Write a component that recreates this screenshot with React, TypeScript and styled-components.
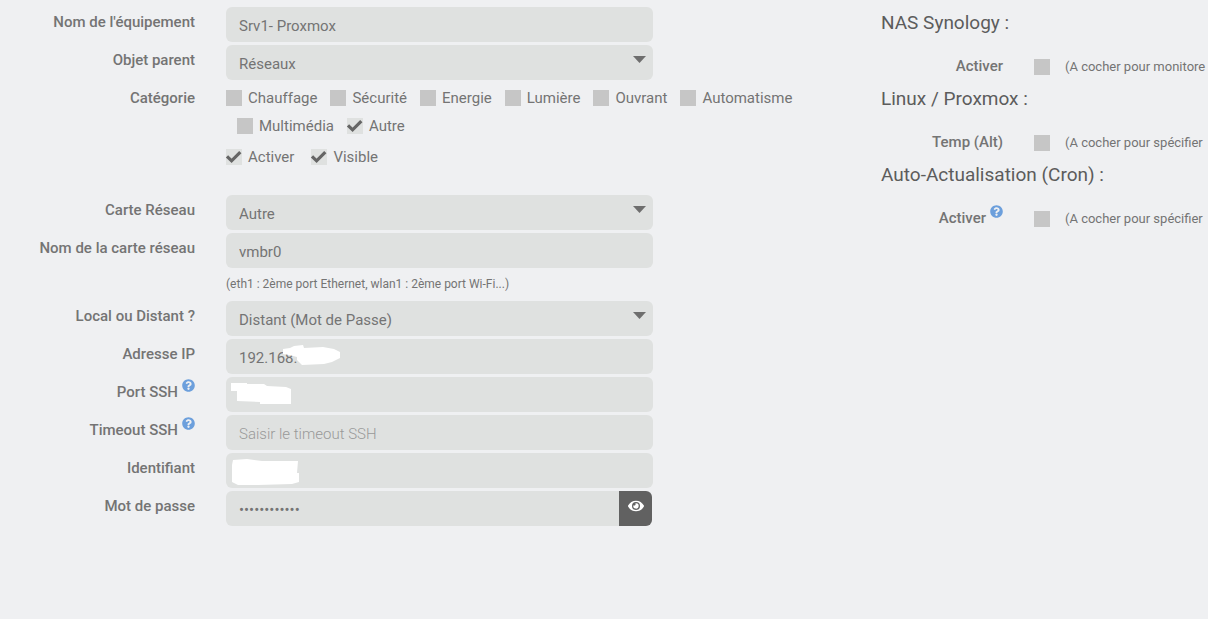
import React from "react";
import styled, { createGlobalStyle, css } from "styled-components";
import { FaEye, FaQuestionCircle } from "react-icons/fa";

const GlobalStyle = createGlobalStyle`
  * { box-sizing: border-box; }
  body {
    margin: 0;
    background: #eff0f2;
    color: #747474;
    font: 400 15px/30px Roboto, "Liberation Sans", sans-serif;
  }
`;

const Page = styled.main`
  display: grid;
  grid-template-columns: minmax(0, 881fr) minmax(0, 327fr);
  min-height: 100vh;
  padding-top: 7px;
  overflow: hidden;
`;

const Form = styled.form`
  display: flex;
  flex-direction: column;
  gap: 3px;
`;

const Row = styled.div<{ $spaced?: boolean }>`
  display: grid;
  grid-template-columns: 195px minmax(0, 427fr) minmax(0, 197fr);
  column-gap: 31px;
  align-items: start;
  margin-top: ${(p) => (p.$spaced ? "21px" : "0")};
`;

const labelText = css`
  display: flex;
  justify-content: flex-end;
  gap: 4px;
  font-weight: 500;
  white-space: nowrap;
`;

const Label = styled.label`
  ${labelText}
`;

const GroupLabel = styled.span`
  ${labelText}
`;

const Help = styled(FaQuestionCircle)`
  width: 13px;
  height: 13px;
  margin-top: 2px;
  color: #6c9fdc;
`;

const Field = styled.div`
  position: relative;
  display: flex;
  height: 35px;
`;

const control = css`
  flex: 1;
  min-width: 0;
  height: 100%;
  border: 0;
  border-radius: 6px;
  padding: 2px 13px 0;
  background: #dfe1e0;
  color: #747474;
  font: inherit;
  outline: 0;
`;

const Input = styled.input<{ $joined?: boolean }>`
  ${control}
  ${(p) => p.$joined && "border-radius: 6px 0 0 6px;"}
  &::placeholder {
    color: #999;
    font-weight: 300;
    opacity: 1;
  }
`;

const Select = styled.select`
  ${control}
  appearance: none;
`;

const Arrow = styled.svg`
  position: absolute;
  top: 11px;
  right: 7px;
  width: 13px;
  height: 7px;
  fill: #6e6e6e;
  pointer-events: none;
`;

const Scribble = styled.svg`
  position: absolute;
  top: 0;
  left: 0;
  width: 120px;
  height: 36px;
  fill: #fff;
  pointer-events: none;
`;

const RevealButton = styled.button`
  display: flex;
  justify-content: center;
  width: 33px;
  margin-right: 1px;
  padding: 7px 0 0;
  border: 0;
  border-radius: 0 6px 6px 0;
  background: #616161;
  color: #fff;
  font-size: 16px;
`;

const Choices = styled.div<{ $wide?: boolean }>`
  grid-column: 2 / -1;
  display: flex;
  flex-wrap: wrap;
  padding-top: ${(p) => (p.$wide ? "0" : "1px")};
  line-height: 28px;
  > * + * {
    margin-left: ${(p) => (p.$wide ? "15px" : "11px")};
  }
`;

const Choice = styled.label`
  display: flex;
  align-items: center;
  gap: 6px;
  padding-right: 2px;
  white-space: nowrap;
`;

const Tick = styled.span`
  position: relative;
  display: block;
  flex: none;
  width: 16px;
  height: 16px;
  input {
    appearance: none;
    display: block;
    width: 16px;
    height: 16px;
    margin: 0;
    background: #c6c6c6;
  }
  input:checked {
    background: #dfe1e0;
  }
  svg {
    position: absolute;
    inset: 0;
    display: none;
    overflow: visible;
    pointer-events: none;
  }
  input:checked + svg {
    display: block;
  }
`;

const Hint = styled.small`
  grid-column: 2 / -1;
  font-size: 12px;
  line-height: 27px;
`;

const Side = styled.aside`
  display: flex;
  flex-direction: column;
  gap: 3px;
  min-width: 0;
`;

const Title = styled.h2`
  margin: 0 0 11px;
  color: #5c5c5c;
  font-size: 19px;
  font-weight: 400;
  line-height: 32px;
`;

const SideRow = styled.div`
  display: grid;
  grid-template-columns: 122px 16px 1fr;
  align-items: center;
  height: 30px;
  white-space: nowrap;
  column-gap: 31px;
  > :not(label) {
    margin-top: 2px;
  }
`;

const SideHint = styled.span`
  margin-left: -16px;
  font-size: 13px;
`;

function Check({ id, on }: { id?: string; on?: boolean }) {
  return (
    <Tick>
      <input id={id} type="checkbox" defaultChecked={on} />
      <svg width="16" height="16" viewBox="0 0 16 16">
        <path d="M1 7.3 5.6 11.8 14.3 3.2" fill="none" stroke="#656565" strokeWidth="3.2" />
      </svg>
    </Tick>
  );
}

function TextRow(props: {
  id: string;
  label: string;
  value?: string;
  placeholder?: string;
  help?: boolean;
  mask?: string;
}) {
  return (
    <Row>
      <Label htmlFor={props.id}>
        {props.label}
        {props.help && <Help />}
      </Label>
      <Field>
        <Input id={props.id} type="text" defaultValue={props.value} placeholder={props.placeholder} />
        {props.mask && (
          <Scribble viewBox="0 0 120 36">
            <path d={props.mask} />
          </Scribble>
        )}
      </Field>
    </Row>
  );
}

function SelectRow(props: { id: string; label: string; value: string; spaced?: boolean }) {
  return (
    <Row $spaced={props.spaced}>
      <Label htmlFor={props.id}>{props.label}</Label>
      <Field>
        <Select id={props.id}>
          <option>{props.value}</option>
        </Select>
        <Arrow viewBox="0 0 13 7">
          <path d="M0 0h13L6.5 7z" />
        </Arrow>
      </Field>
    </Row>
  );
}

const categories = ["Chauffage", "Sécurité", "Energie", "Lumière", "Ouvrant", "Automatisme", "Multimédia", "Autre"];

const options = [
  { id: "nas", title: "NAS Synology :", label: "Activer", hint: "(A cocher pour monitore" },
  { id: "temp", title: "Linux / Proxmox :", label: "Temp (Alt)", hint: "(A cocher pour spécifier" },
  { id: "cron", title: "Auto-Actualisation (Cron) :", label: "Activer", hint: "(A cocher pour spécifier", help: true },
];

export default function App() {
  return (
    <Page>
      <GlobalStyle />
      <Form onSubmit={(e) => e.preventDefault()}>
        <TextRow id="name" label="Nom de l'équipement" value="Srv1- Proxmox" />
        <SelectRow id="parent" label="Objet parent" value="Réseaux" />
        <Row>
          <GroupLabel id="categories">Catégorie</GroupLabel>
          <Choices role="group" aria-labelledby="categories">
            {categories.map((name) => (
              <Choice key={name}>
                <Check on={name === "Autre"} />
                {name}
              </Choice>
            ))}
          </Choices>
        </Row>
        <Row>
          <Choices $wide>
            <Choice><Check on />Activer</Choice>
            <Choice><Check on />Visible</Choice>
          </Choices>
        </Row>
        <SelectRow id="card" label="Carte Réseau" value="Autre" spaced />
        <TextRow id="cardName" label="Nom de la carte réseau" value="vmbr0" />
        <Row>
          <Hint>(eth1 : 2ème port Ethernet, wlan1 : 2ème port Wi-Fi...)</Hint>
        </Row>
        <SelectRow id="mode" label="Local ou Distant ?" value="Distant (Mot de Passe)" />
        <TextRow
          id="ip"
          label="Adresse IP"
          value="192.168."
          mask="M57 10 64 9 68 7 77 6 78 9 97 8 108 10 114 13V19L106 23 98 25 76 26 71 21V18L63 16 57 15Z"
        />
        <TextRow
          id="port"
          label="Port SSH"
          help
          mask="M5 6H21V7H38L41 9 60 10 65 12V27H34V25L11 24V14H5Z"
        />
        <TextRow id="timeout" label="Timeout SSH" placeholder="Saisir le timeout SSH" help />
        <TextRow
          id="user"
          label="Identifiant"
          mask="M7 7 21 6 36 8H72L71 20H73V29L66 31 32 32H12L6 29V12Z"
        />
        <Row>
          <Label htmlFor="password">Mot de passe</Label>
          <Field>
            <Input id="password" type="password" defaultValue="motdepasse12" $joined />
            <RevealButton type="button" aria-label="Afficher le mot de passe">
              <FaEye />
            </RevealButton>
          </Field>
        </Row>
      </Form>
      <Side>
        {options.map((o) => (
          <section key={o.id}>
            <Title>{o.title}</Title>
            <SideRow>
              <Label htmlFor={o.id}>
                {o.label}
                {o.help && <Help />}
              </Label>
              <Check id={o.id} />
              <SideHint>{o.hint}</SideHint>
            </SideRow>
          </section>
        ))}
      </Side>
    </Page>
  );
}
